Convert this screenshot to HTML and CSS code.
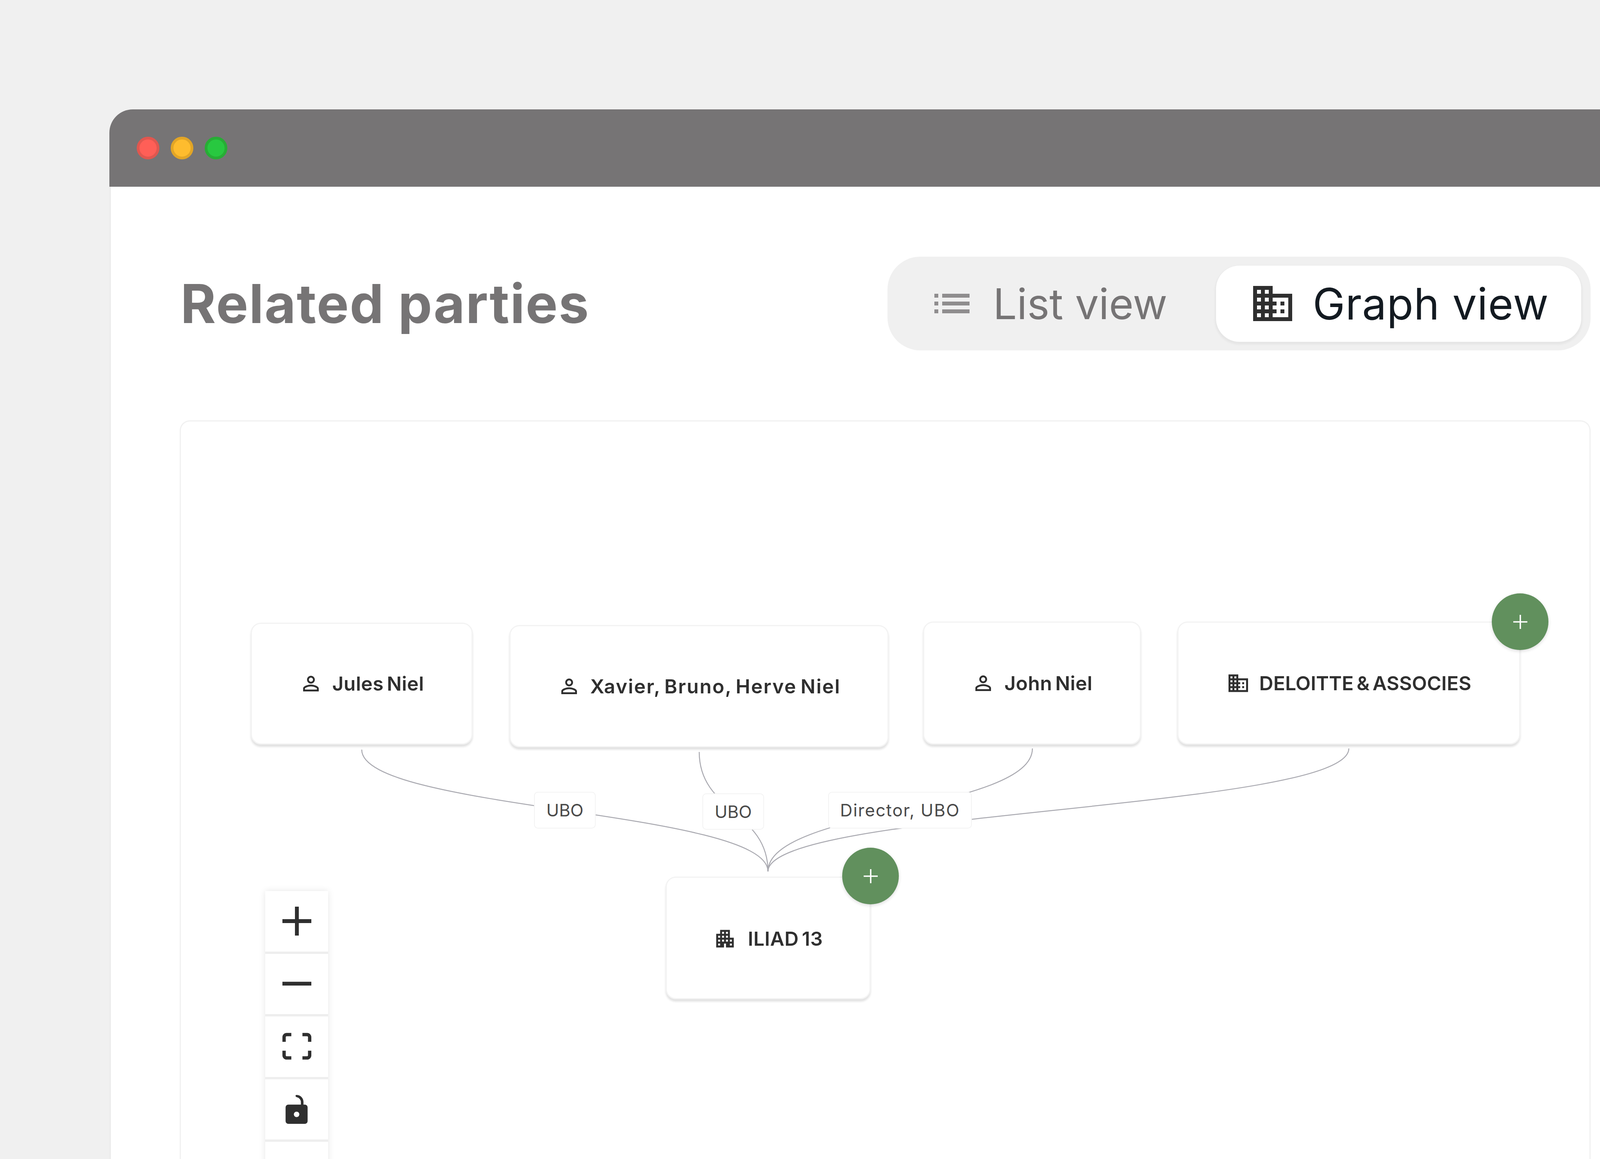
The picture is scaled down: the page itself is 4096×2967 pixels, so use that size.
FILE: index.html
```html
<!DOCTYPE html>
<html lang="en">
<head>
<meta charset="utf-8">
<title>Related parties</title>
<link rel="stylesheet" href="styles.css">
</head>
<body>
<div class="window">
  <div class="titlebar">
    <span class="dot dot-red"></span>
    <span class="dot dot-yellow"></span>
    <span class="dot dot-green"></span>
  </div>
  <main class="content">
    <header class="header">
      <h1 class="title">Related parties</h1>
      <div class="toggle">
        <div class="tab tab-list">
          <svg class="tab-icon" viewBox="0 0 24 24"><path d="M3 13h2v-2H3v2zm0 4h2v-2H3v2zm0-8h2V7H3v2zm4 4h14v-2H7v2zm0 4h14v-2H7v2zM7 7v2h14V7H7z"/></svg>
          <span>List view</span>
        </div>
        <div class="tab tab-graph">
          <svg class="tab-icon" viewBox="0 0 24 24"><path d="M12 7V3H2v18h20V7H12zM6 19H4v-2h2v2zm0-4H4v-2h2v2zm0-4H4V9h2v2zm0-4H4V5h2v2zm4 12H8v-2h2v2zm0-4H8v-2h2v2zm0-4H8V9h2v2zm0-4H8V5h2v2zm10 12h-8v-2h2v-2h-2v-2h2v-2h-2V9h8v10zm-2-8h-2v2h2v-2zm0 4h-2v2h2v-2z"/></svg>
          <span>Graph view</span>
        </div>
      </div>
    </header>
    <section class="canvas">
      <svg class="edges" viewBox="463 1079 3606 1888">
        <path d="M926 1919C926 2074 1966 2074 1966 2231"/>
        <path d="M1790 1925C1790 2078 1966 2078 1966 2231"/>
        <path d="M2643 1916C2643 2073 1966 2073 1966 2231"/>
        <path d="M3453 1916C3453 2073 1966 2073 1966 2231"/>
      </svg>

      <div class="node node-jules">
        <svg class="node-icon" viewBox="0 0 24 24"><path d="M12 5.9c1.16 0 2.1.94 2.1 2.1s-.94 2.1-2.1 2.1S9.9 9.16 9.9 8s.94-2.1 2.1-2.1m0 9c2.97 0 6.1 1.46 6.1 2.1v1.1H5.9V17c0-.64 3.13-2.1 6.1-2.1M12 4C9.79 4 8 5.79 8 8s1.79 4 4 4 4-1.79 4-4-1.79-4-4-4zm0 9c-2.67 0-8 1.34-8 4v3h16v-3c0-2.66-5.33-4-8-4z"/></svg>
        <span>Jules Niel</span>
      </div>
      <div class="node node-xavier">
        <svg class="node-icon" viewBox="0 0 24 24"><path d="M12 5.9c1.16 0 2.1.94 2.1 2.1s-.94 2.1-2.1 2.1S9.9 9.16 9.9 8s.94-2.1 2.1-2.1m0 9c2.97 0 6.1 1.46 6.1 2.1v1.1H5.9V17c0-.64 3.13-2.1 6.1-2.1M12 4C9.79 4 8 5.79 8 8s1.79 4 4 4 4-1.79 4-4-1.79-4-4-4zm0 9c-2.67 0-8 1.34-8 4v3h16v-3c0-2.66-5.33-4-8-4z"/></svg>
        <span>Xavier, Bruno, Herve Niel</span>
      </div>
      <div class="node node-john">
        <svg class="node-icon" viewBox="0 0 24 24"><path d="M12 5.9c1.16 0 2.1.94 2.1 2.1s-.94 2.1-2.1 2.1S9.9 9.16 9.9 8s.94-2.1 2.1-2.1m0 9c2.97 0 6.1 1.46 6.1 2.1v1.1H5.9V17c0-.64 3.13-2.1 6.1-2.1M12 4C9.79 4 8 5.79 8 8s1.79 4 4 4 4-1.79 4-4-1.79-4-4-4zm0 9c-2.67 0-8 1.34-8 4v3h16v-3c0-2.66-5.33-4-8-4z"/></svg>
        <span>John Niel</span>
      </div>
      <div class="node node-deloitte">
        <svg class="node-icon" viewBox="0 0 24 24"><path d="M12 7V3H2v18h20V7H12zM6 19H4v-2h2v2zm0-4H4v-2h2v2zm0-4H4V9h2v2zm0-4H4V5h2v2zm4 12H8v-2h2v2zm0-4H8v-2h2v2zm0-4H8V9h2v2zm0-4H8V5h2v2zm10 12h-8v-2h2v-2h-2v-2h2v-2h-2V9h8v10zm-2-8h-2v2h2v-2zm0 4h-2v2h2v-2z"/></svg>
        <span>DELOITTE &amp; ASSOCIES</span>
      </div>
      <div class="node node-iliad">
        <svg class="node-icon" viewBox="0 0 24 24"><path d="M17 11V3H7v4H3v14h8v-4h2v4h8V11h-4zM7 19H5v-2h2v2zm0-4H5v-2h2v2zm0-4H5V9h2v2zm4 4H9v-2h2v2zm0-4H9V9h2v2zm0-4H9V5h2v2zm4 8h-2v-2h2v2zm0-4h-2V9h2v2zm0-4h-2V5h2v2zm4 12h-2v-2h2v2zm0-4h-2v-2h2v2z"/></svg>
        <span>ILIAD 13</span>
      </div>

      <div class="edge-label label-a">UBO</div>
      <div class="edge-label label-b">UBO</div>
      <div class="edge-label label-c">Director, UBO</div>

      <div class="add add-deloitte"><svg viewBox="0 0 40 40"><path d="M20 0v40M0 20h40"/></svg></div>
      <div class="add add-iliad"><svg viewBox="0 0 40 40"><path d="M20 0v40M0 20h40"/></svg></div>

      <div class="controls">
        <div class="control"><svg viewBox="0 0 32 32"><path d="M32 18.133H18.133V32h-4.266V18.133H0v-4.266h13.867V0h4.266v13.867H32z"/></svg></div>
        <div class="control"><svg viewBox="0 0 32 5"><path d="M0 0h32v4.2H0z"/></svg></div>
        <div class="control"><svg viewBox="0 0 32 30"><path d="M3.692 4.63c0-.53.4-.938.939-.938h5.215V0H4.708C2.13 0 0 2.054 0 4.63v5.216h3.692V4.631zM27.354 0h-5.2v3.692h5.17c.53 0 .984.4.984.939v5.215H32V4.631A4.624 4.624 0 0027.354 0zm.954 24.83c0 .532-.4.94-.939.94h-5.215v3.768h5.215c2.577 0 4.631-2.13 4.631-4.707v-5.139h-3.692v5.139zm-23.677.94c-.531 0-.939-.4-.939-.94v-5.138H0v5.139c0 2.577 2.13 4.707 4.708 4.707h5.138V25.77H4.631z"/></svg></div>
        <div class="control"><svg viewBox="0 0 25 32"><path d="M21.333 10.667H19.81V7.619C19.81 3.429 16.38 0 12.19 0c-1.828 0-1.37 2.133.305 2.438 1.676.305 4.42 2.59 4.42 5.181v3.048H3.047A3.056 3.056 0 000 13.714v15.238A3.056 3.056 0 003.048 32h18.285a3.056 3.056 0 003.048-3.048V13.714a3.056 3.056 0 00-3.048-3.047zM12.19 24.533a3.056 3.056 0 01-3.047-3.047 3.056 3.056 0 013.047-3.048 3.056 3.056 0 013.048 3.048 3.056 3.056 0 01-3.048 3.047z"/></svg></div>
        <div class="control"></div>
      </div>
    </section>
  </main>
</div>
</body>
</html>
```
FILE: styles.css
```css
* { box-sizing: border-box; }
html, body { margin: 0; height: 100%; }
body {
  background: #f0f0f0;
  font-family: Inter, "Liberation Sans", sans-serif;
  overflow: hidden;
  padding: 280px 0 0 280px;
}
.window {
  height: 2687px;
  display: flex;
  flex-direction: column;
  overflow: hidden;
  border-radius: 60px 0 0 0;
}
.titlebar {
  height: 198px;
  flex: none;
  background: #767475;
  display: flex;
  align-items: center;
  gap: 29px;
  padding-left: 70px;
}
.dot {
  width: 58px;
  height: 58px;
  border-radius: 50%;
  border: 7px solid;
}
.dot-red { background: #ff5f57; border-color: #e0574f; }
.dot-yellow { background: #febc2e; border-color: #e2a526; }
.dot-green { background: #28c840; border-color: #27ad35; }

.content {
  flex: 1;
  background: #fff;
  border-left: 4px solid #ececec;
  padding: 179px 24px 0 176px;
  display: flex;
  flex-direction: column;
  min-height: 0;
}
.header {
  display: flex;
  align-items: center;
  justify-content: space-between;
  flex: none;
  padding-left: 2px;
}
.title {
  margin: 0;
  font-size: 138px;
  font-weight: 700;
  letter-spacing: 2.2px;
  color: #767475;
  line-height: 1;
}
.toggle {
  display: flex;
  align-items: center;
  height: 240px;
  padding: 0 24px 0 105px;
  background: #f0f0f0;
  border-radius: 84px;
  font-size: 108px;
  font-weight: 400;
}
.tab {
  display: flex;
  align-items: center;
  gap: 45px;
}
.tab-list { color: #767475; padding-right: 125px; }
.tab-list svg { fill: #8f8d8e; }
.tab-graph {
  height: 195px;
  gap: 42px;
  padding: 0 83px 0 85px;
  color: #131a21;
  font-size: 111px;
  letter-spacing: 1px;
  background: #fff;
  border-radius: 60px;
  box-shadow: 0 4px 4px 3px #e6e6e6;
}
.tab-graph svg { fill: #2f2f2f; }
.tab-icon { width: 120px; height: 120px; flex: none; }

.canvas {
  position: relative;
  flex: 1;
  margin-top: 179px;
  border: 3px solid #f1f1f1;
  border-bottom: 0;
  border-radius: 26px 26px 0 0;
  overflow: hidden;
}
.edges {
  position: absolute;
  left: 0;
  top: 0;
  width: 3606px;
  height: 1888px;
  fill: none;
  stroke: #a9a9b0;
  stroke-width: 2.5;
}
.node {
  position: absolute;
  display: flex;
  align-items: center;
  justify-content: center;
  gap: 24px;
  background: #fff;
  border: 3px solid #f3f3f3;
  border-radius: 26px;
  box-shadow: 0 6px 5px 0 #e2e2e2;
  color: #2f2f2f;
  font-size: 50px;
  font-weight: 600;
  letter-spacing: .4px;
  word-spacing: -5px;
}
.node-icon { width: 60px; height: 60px; flex: none; fill: #2f2f2f; }
.node-jules { left: 179px; top: 515px; width: 568px; height: 312px; }
.node-xavier { left: 841px; top: 521px; width: 971px; height: 313px; letter-spacing: 2.2px; }
.node-john { left: 1900px; top: 512px; width: 558px; height: 315px; }
.node-deloitte { left: 2551px; top: 512px; width: 878px; height: 315px; letter-spacing: 0; }
.node-iliad { left: 1241px; top: 1165px; width: 525px; height: 314px; padding-top: 4px; gap: 28px; }

.edge-label {
  position: absolute;
  display: flex;
  align-items: center;
  justify-content: center;
  background: #fff;
  border: 2px solid #f3f3f3;
  border-radius: 10px;
  color: #4a4a4a;
  font-size: 44px;
  font-weight: 400;
}
.label-a { left: 904px; top: 948px; width: 158px; height: 94px; }
.label-b { left: 1335px; top: 952px; width: 158px; height: 93px; }
.label-c { left: 1657px; top: 948px; width: 368px; height: 94px; letter-spacing: 1.8px; }

.add {
  position: absolute;
  width: 145px;
  height: 145px;
  display: flex;
  align-items: center;
  justify-content: center;
  border-radius: 50%;
  background: #61905d;
  box-shadow: 0 3px 8px rgba(0, 0, 0, .14);
}
.add svg { width: 36px; height: 36px; fill: none; stroke: #fff; stroke-width: 4; }
.add-deloitte { left: 3356px; top: 440px; }
.add-iliad { left: 1693px; top: 1091px; }

.controls {
  position: absolute;
  left: 216px;
  top: 1202px;
  width: 161px;
  box-shadow: 0 0 16px rgba(0, 0, 0, .1);
}
.control {
  height: 160.6px;
  display: flex;
  align-items: center;
  justify-content: center;
  background: #fff;
  border-bottom: 6.6px solid #eee;
}
.control svg { width: 74px; height: 74px; fill: #2f2f2f; }
```
